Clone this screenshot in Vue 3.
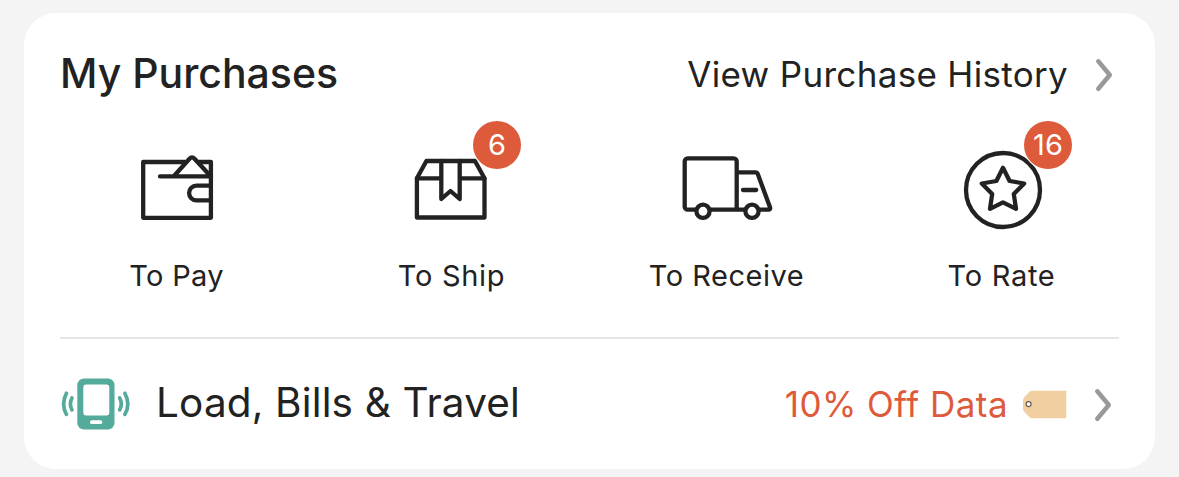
<script setup>
const statuses = [
  { id: 'pay', label: 'To Pay' },
  { id: 'ship', label: 'To Ship', count: 6 },
  { id: 'receive', label: 'To Receive' },
  { id: 'rate', label: 'To Rate', count: 16 },
]
</script>

<template>
  <main class="page">
    <section class="card">
      <header class="header">
        <h1 class="title">My Purchases</h1>
        <a class="history">View Purchase History</a>
        <svg class="chevron" viewBox="0 0 20 34"><path d="M4.3 3.3 15.8 17 4.3 30.8" /></svg>
      </header>

      <nav class="statuses">
        <a v-for="item in statuses" :key="item.id" class="status" :class="item.id">
          <span class="icon-box">
            <svg class="icon" viewBox="0 0 97 96">
              <g v-if="item.id === 'pay'">
                <path d="M57 22H15.2V77.8H82.9V22H71" />
                <path d="M32 36.4H82.5M46 36 61.5 18.8Q64 16 66.5 18.8L82.5 36" />
                <path d="M82.9 45.7H68.4a7.3 7.3 0 0 0 0 14.6H82.9" />
              </g>
              <g v-else-if="item.id === 'ship'">
                <path d="M13.9 38.3 23.4 21H72L81.5 38.3V77.5H13.9Z" />
                <path d="M13.900 38.3H38.3M56.7 38.3H81.5M38.3 21V59L47.5 51 56.7 59V21" />
              </g>
              <g v-else-if="item.id === 'receive'">
                <path d="M18 69.7H9.7a3 3 0 0 1-3-3V21.3a3 3 0 0 1 3-3H55.7a3 3 0 0 1 3 3V69.7M32 69.7H67M58.7 32.4H77.8a2 2 0 0 1 1.9 1.3L92 67.3Q92.8 69.7 90.3 69.7H81M65 50H78.2" />
                <circle cx="25" cy="71.3" r="6.6" />
                <circle cx="74" cy="71.3" r="6.6" />
              </g>
              <g v-else>
                <circle cx="50" cy="50" r="37" />
                <path d="M50 27.8 56.6 41 71.2 43.5 60.8 54 63 68.8 50 62.3 37 68.8 39.2 54 28.8 43.5 43.4 41Z" />
              </g>
            </svg>
            <span v-if="item.count" class="badge">{{ item.count }}</span>
          </span>
          <span class="label">{{ item.label }}</span>
        </a>
      </nav>

      <footer class="services">
        <svg class="phone" viewBox="0 0 72 56">
          <rect class="solid" x="17.3" y="2.6" width="37.2" height="50.8" rx="6.5" />
          <rect class="cutout" x="23.3" y="8.6" width="26" height="31" rx="3" />
          <rect class="cutout" x="30" y="44.3" width="12.3" height="3.8" rx="1.9" />
          <path class="wave" d="M6.4 17.3Q.8 28 6.4 38.4M11.9 22Q8.9 28 11.9 33.8M64.9 17.3Q70.8 28 64.9 38.4M59.7 22Q62.9 28 59.7 33.8" />
        </svg>
        <span class="service-name">Load, Bills &amp; Travel</span>
        <span class="promo">10% Off Data</span>
        <svg class="tag" viewBox="0 0 44 28">
          <path d="M9 .7H43.3V28.300H9Q7.500 28.300 6.500 27.300L1.500 22Q0 20.500 0 18.500V10.500Q0 8.500 1.500 7L6.500 1.700Q7.500 .7 9 .7Z" />
          <circle cx="5.600" cy="14.100" r="2.500" />
        </svg>
        <svg class="chevron" viewBox="0 0 20 34"><path d="M4.3 3.300 15.800 17 4.300 30.800" /></svg>
      </footer>
    </section>
  </main>
</template>

<style>
body {
  background: #f4f4f4;
}
</style>

<style scoped>
.page {
  box-sizing: border-box;
  height: 477px;
  padding: 13px 24px 8px;
  background: #f4f4f4;
  color: #222;
  font-family: Inter, "Liberation Sans", sans-serif;
  overflow: hidden;
}
.card {
  height: 456px;
  border-radius: 32px;
  background: #fff;
  display: flex;
  flex-direction: column;
}
.header {
  display: flex;
  align-items: center;
  height: 124px;
  padding: 0 41px 0 37px;
  line-height: 124px;
  white-space: nowrap;
}
.title {
  margin: -4px auto 0 -1px;
  font-size: 41px;
  font-weight: 500;
  letter-spacing: 0;
}
.history {
  margin-top: -2px;
  font-size: 35px;
  letter-spacing: 0.320px;
}
.chevron {
  width: 20px;
  height: 34px;
  margin-left: 26px;
  fill: none;
  stroke: #999;
  stroke-width: 4.5;
  stroke-linecap: round;
  stroke-linejoin: round;
}
.statuses {
  display: grid;
  grid-template-columns: repeat(4, 275px);
  height: 200px;
  margin-left: 15px;
}
.status {
  display: flex;
  flex-direction: column;
  align-items: center;
}
.icon-box {
  position: relative;
  width: 97px;
  height: 96px;
  margin-top: 3px;
}
.icon {
  display: block;
  width: 97px;
  height: 96px;
  fill: none;
  stroke: #222;
  stroke-width: 4.300;
  stroke-linecap: round;
  stroke-linejoin: round;
}
.badge {
  position: absolute;
  left: 70px;
  top: -19px;
  width: 48px;
  height: 48px;
  border-radius: 50%;
  background: #dd5a3b;
  box-shadow: 0 0 0 1px #fff;
  color: #fff;
  font-size: 29px;
  line-height: 48px;
  text-align: center;
}
.rate .badge {
  left: 71px;
}
.label {
  margin-top: 20px;
  font-size: 29px;
  line-height: 40px;
  letter-spacing: 0.700px;
}
.pay .label {
  letter-spacing: 0.300px;
}
.receive .label {
  letter-spacing: 0.500px;
}
.services {
  display: flex;
  align-items: center;
  height: 130px;
  margin: 0 36px;
  padding-right: 6px;
  border-top: 2px solid #e6e6e6;
  white-space: nowrap;
}
.phone {
  width: 72px;
  height: 56px;
}
.solid {
  fill: #54aa9b;
}
.cutout {
  fill: #fff;
}
.wave {
  fill: none;
  stroke: #54aa9b;
  stroke-width: 3.700;
  stroke-linecap: round;
}
.service-name {
  margin: -3px auto 0 24px;
  font-size: 40.500px;
  letter-spacing: 0.150px;
}
.promo {
  color: #dd5a3b;
  font-size: 35px;
  letter-spacing: 0.450px;
}
.tag {
  width: 44px;
  height: 28px;
  margin-left: 15px;
  overflow: visible;
  fill: #f2cfa0;
}
.tag circle {
  fill: #fff;
  stroke: #665e55;
  stroke-width: 1.200;
}
.services .chevron {
  margin-top: 1px;
}
</style>
